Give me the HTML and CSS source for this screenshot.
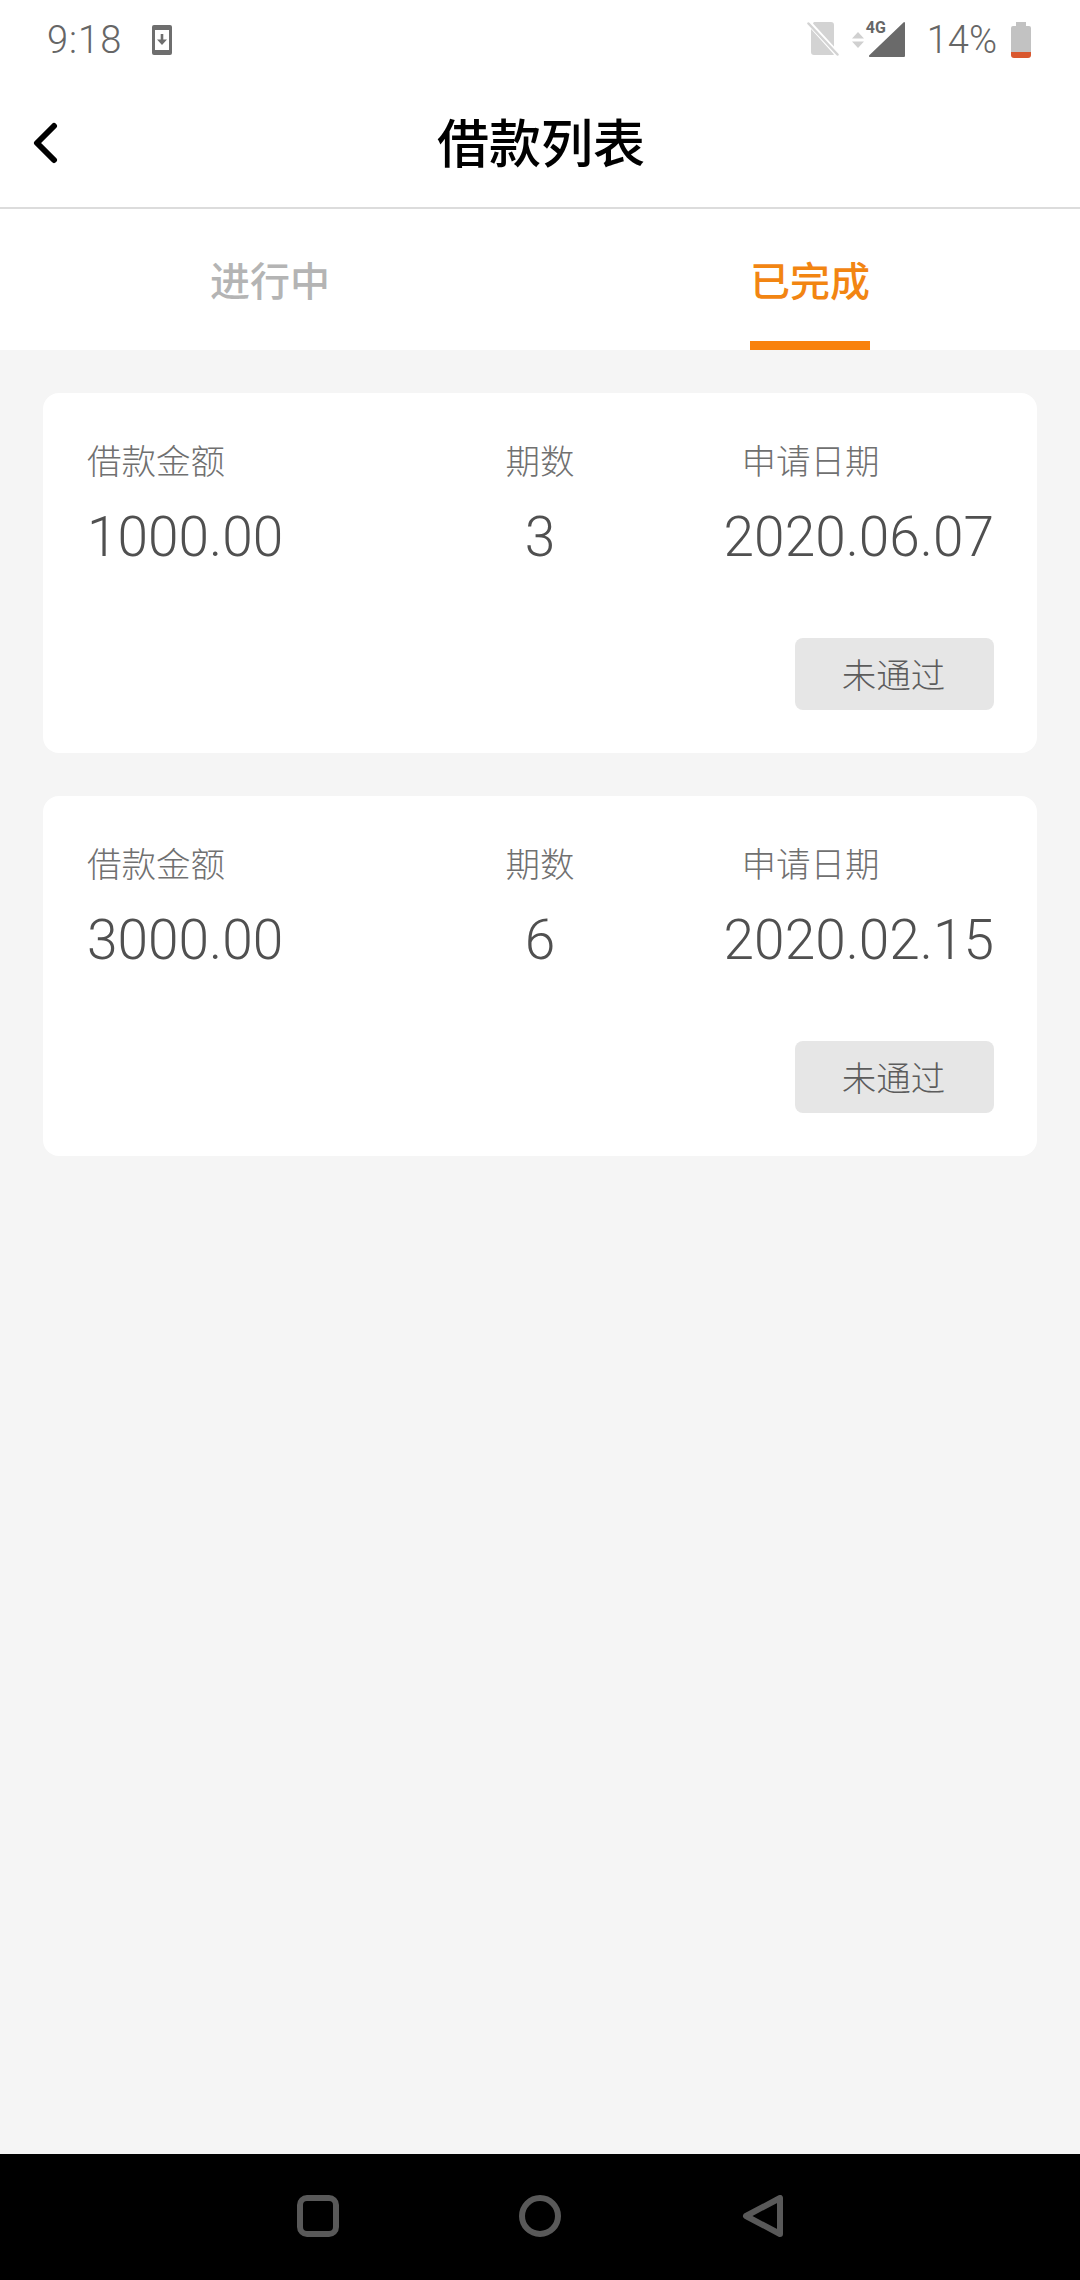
FILE: index.html
```html
<!DOCTYPE html>
<html lang="zh">
<head>
<meta charset="utf-8">
<title>借款列表</title>
<link rel="stylesheet" href="styles.css">
</head>
<body>
<div class="app">
  <div class="status">
    <span class="time">9:18</span>
    <svg class="ic-dl" width="20" height="30" viewBox="0 0 20 30"><path fill="#6e6e6e" fill-rule="evenodd" d="M2 0h16a2 2 0 0 1 2 2v26a2 2 0 0 1-2 2H2a2 2 0 0 1-2-2V2a2 2 0 0 1 2-2zM3 5v20h14V5z"/><path fill="#6e6e6e" d="M8.700 9h2.600v5.500H15L10 20 5 14.500h3.700z"/></svg>
    <span class="grow"></span>
    <svg class="ic-sim" width="32" height="34" viewBox="0 0 32 34"><path fill="#d3d3d3" d="M7 0h17a3 3 0 0 1 3 3v21.500L6 1.500A3 3 0 0 1 7 0zM4 7l23 25.500A3 3 0 0 1 25 33H7a3 3 0 0 1-3-3z"/><path stroke="#d3d3d3" stroke-width="2.500" stroke-linecap="round" d="M1.500 1.500l29 31"/></svg>
    <svg class="ic-arrows" width="12" height="16" viewBox="0 0 12 16"><path fill="#d0d0d0" d="M6 0l6 6.500H0zM0 9.500h12L6 16z"/></svg>
    <span class="signal">
      <svg width="36" height="35" viewBox="0 0 36 35"><path fill="#6a6a6a" d="M35 0a1 1 0 0 1 1 1v33a1 1 0 0 1-1 1H1a1 1 0 0 1-.7-1.700z"/></svg>
      <span class="net">4G</span>
    </span>
    <span class="pct">14%</span>
    <svg class="ic-batt" width="20" height="36" viewBox="0 0 20 36"><path fill="#c2c2c2" d="M5 0h10v4h3a2 2 0 0 1 2 2v24H0V6a2 2 0 0 1 2-2h3z"/><path fill="#d9582f" d="M0 30h20v3a3 3 0 0 1-3 3H3a3 3 0 0 1-3-3z"/></svg>
  </div>
  <header class="bar">
    <svg class="back" width="26" height="42" viewBox="0 0 26 42"><path fill="none" stroke="#000" stroke-width="6" stroke-linecap="round" stroke-linejoin="round" d="M21 4L4 21l17 17"/></svg>
    <h1 class="title">借款列表</h1>
  </header>
  <nav class="tabs">
    <div class="tab">进行中</div>
    <div class="tab tab-on"><span class="tab-label">已完成</span></div>
  </nav>
  <main class="list">
    <section class="card">
      <div class="row">
        <div class="col col-a"><div class="label">借款金额</div><div class="value">1000.00</div></div>
        <div class="col col-b"><div class="label">期数</div><div class="value">3</div></div>
        <div class="col col-c"><div class="label">申请日期</div><div class="value">2020.06.07</div></div>
      </div>
      <div class="foot"><span class="chip">未通过</span></div>
    </section>
    <section class="card">
      <div class="row">
        <div class="col col-a"><div class="label">借款金额</div><div class="value">3000.00</div></div>
        <div class="col col-b"><div class="label">期数</div><div class="value">6</div></div>
        <div class="col col-c"><div class="label">申请日期</div><div class="value">2020.02.15</div></div>
      </div>
      <div class="foot"><span class="chip">未通过</span></div>
    </section>
  </main>
  <footer class="nav">
    <svg width="42" height="42" viewBox="0 0 42 42"><rect x="3" y="3" width="36" height="36" rx="7" fill="none" stroke="#595959" stroke-width="6"/></svg>
    <svg width="42" height="42" viewBox="0 0 42 42"><circle cx="21" cy="21" r="18" fill="none" stroke="#595959" stroke-width="6"/></svg>
    <svg width="42" height="42" viewBox="0 0 42 42"><path fill="none" stroke="#595959" stroke-width="6" stroke-linejoin="round" d="M39 3v36L5 21z"/></svg>
  </footer>
</div>
</body>
</html>
```
FILE: styles.css
```css
* { box-sizing: border-box; margin: 0; padding: 0; }
html, body { height: 100%; }
body { font-family: Roboto, "Noto Sans CJK SC", sans-serif; background: #f5f5f5; }
.app { display: flex; flex-direction: column; height: 2280px; width: 1080px; overflow: hidden; }

.status { height: 80px; background: #fff; display: flex; align-items: center; padding: 0 49px 0 47px; }
.time { font-size: 38px; font-weight: 300; color: #666; letter-spacing: 1px; }
.ic-dl { margin-left: 30px; }
.grow { flex: 1; }
.ic-sim { margin-right: 13px; margin-top: -2px; }
.ic-arrows { margin-right: 5px; }
.signal { position: relative; width: 36px; height: 35px; display: flex; margin-top: -1px; }
.net { position: absolute; left: -3px; top: -2px; font-size: 16px; line-height: 16px; font-weight: 700; color: #666; }
.pct { font-size: 38px; font-weight: 300; color: #666; margin-left: 22px; }
.ic-batt { margin-left: 14px; }

.bar { height: 129px; background: #fff; border-bottom: 2px solid #dcdcdc; display: flex; align-items: center; justify-content: center; position: relative; }
.back { position: absolute; left: 33px; top: 42px; }
.title { font-size: 52px; font-weight: 500; color: #000; line-height: 1; margin: -6px 0 0 2px; font-family: "Noto Sans CJK SC", sans-serif; }

.tabs { height: 141px; background: #fff; display: flex; }
.tab { flex: 1; display: flex; justify-content: center; align-items: center; padding-bottom: 2px; font-size: 40px; font-weight: 500; color: #b4b4b4; font-family: "Noto Sans CJK SC", sans-serif; }
.tab-on { color: #f28512; align-items: stretch; padding-bottom: 0; }
.tab-label { display: flex; align-items: center; width: 120px; padding-top: 7px; border-bottom: 9px solid #f9820c; }

.list { flex: 1; padding: 43px; display: flex; flex-direction: column; gap: 43px; }
.card { height: 360px; background: #fff; border-radius: 16px; padding: 41px 43px 44px 44px; display: flex; flex-direction: column; }
.row { display: flex; }
.col { display: flex; flex-direction: column; }
.col-a { width: 403px; }
.col-b { width: 100px; align-items: center; }
.col-c { margin-left: auto; align-items: flex-start; }
.col-c .label { margin-left: 18px; }
.label { font-size: 34.500px; line-height: 50px; font-weight: 300; color: #707070; font-family: "Noto Sans CJK SC", sans-serif; }
.value { font-size: 55px; line-height: 62px; margin-top: 22px; font-weight: 300; color: #505050; white-space: nowrap; }
.foot { margin-top: auto; margin-bottom: -1px; display: flex; justify-content: flex-end; }
.chip { width: 199px; height: 72px; border-radius: 8px; background: #e6e6e6; display: flex; align-items: center; justify-content: center; padding: 0 2px 3px 0; font-size: 34.500px; font-weight: 300; color: #5c5c5c; font-family: "Noto Sans CJK SC", sans-serif; }

.nav { height: 126px; background: #000; display: flex; align-items: center; justify-content: center; gap: 180px; padding-bottom: 2px; }
```
